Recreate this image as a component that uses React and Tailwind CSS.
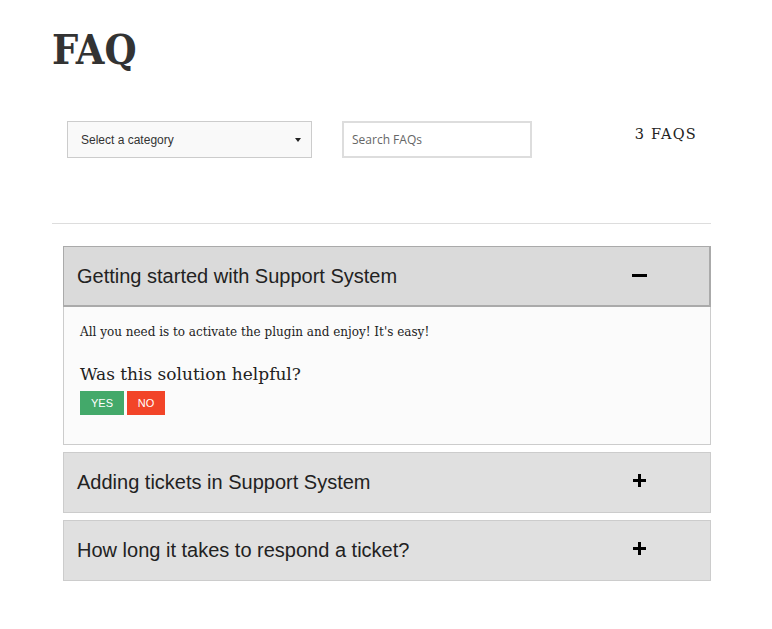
import React, { useState } from 'react';

const faqs = [
    { q: 'Getting started with Support System', a: "All you need is to activate the plugin and enjoy! It's easy!" },
    { q: 'Adding tickets in Support System', a: 'Open the tickets page and click the add button.' },
    { q: 'How long it takes to respond a ticket?', a: 'Usually within one business day.' },
];

const App = () => {
    const [open, setOpen] = useState(0);

    return (
        <div className="bg-white min-h-[629px] w-[772px] text-[#333]">
            <div className="pl-[52px] pr-[61px] pt-[22px]">

                {/* Title */}
                <h1 className="font-['DejaVu_Serif_Condensed','DejaVu_Serif',serif] font-bold text-[41px] leading-[56px] text-[#333]">
                    FAQ
                </h1>

                {/* Filters */}
                <div className="mt-[43px] flex items-start pl-[15px]">
                    <div className="relative w-[245px] h-[37px] border border-[#ccc] bg-[#f9f9f9] flex items-center pl-[13px] font-['Liberation_Sans',Arial,sans-serif] text-[12px] text-[#333]">
                        Select a category
                        <span className="absolute right-[10px] top-[16px] w-0 h-0 border-l-[3px] border-r-[3px] border-t-[4px] border-l-transparent border-r-transparent border-t-[#222]"></span>
                    </div>
                    <div className="ml-[30px] w-[190px] h-[37px] border-2 border-[#ddd] bg-white flex items-center pl-[8px] font-['Open_Sans',sans-serif] text-[12px] text-[#666]">
                        Search FAQs
                    </div>
                    <div className="ml-auto mt-[3px] mr-[14px] font-['DejaVu_Serif',serif] text-[14.5px] tracking-[1.2px] text-[#222]">
                        3 FAQS
                    </div>
                </div>

                <div className="mt-[65px] border-t border-[#ddd]"></div>

                {/* Accordion */}
                <div className="mt-[22px] ml-[11px] flex flex-col gap-[7px]">
                    {faqs.map((f, i) => {
                        const isOpen = open === i;
                        return (
                            <div key={i}>
                                <button
                                    onClick={() => setOpen(isOpen ? -1 : i)}
                                    className={`w-full h-[61px] flex items-center justify-between pl-[13px] text-left font-['Liberation_Sans',Arial,sans-serif] text-[20px] text-[#222] border ${isOpen ? 'pr-[62px] bg-[#dadada] border-[#aaa] border-b-2 border-r-2' : 'pr-[64px] bg-[#e0e0e0] border-[#ccc]'}`}
                                >
                                    <span className={isOpen ? 'mt-[-1px]' : 'mt-[-2px]'}>{f.q}</span>
                                    {isOpen ? (
                                        <span className="block w-[15px] h-[3px] bg-black mt-[-2px]"></span>
                                    ) : (
                                        <svg width="13" height="13" viewBox="0 0 13 13" className="mt-[-4px]">
                                            <rect x="5" y="0" width="3" height="13" fill="#000" />
                                            <rect x="0" y="5" width="13" height="3" fill="#000" />
                                        </svg>
                                    )}
                                </button>
                                {isOpen && (
                                    <div className="border border-t-0 border-[#ccc] bg-[#fbfbfb] h-[138px] pl-[16px] pt-[15px]">
                                        <p className="font-['DejaVu_Serif',serif] text-[12px] text-[#222] leading-[20px]">{f.a}</p>
                                        <h3 className="mt-[19px] font-['DejaVu_Serif',serif] text-[17px] text-[#222] leading-[26px]">Was this solution helpful?</h3>
                                        <div className="mt-[4px] flex gap-[3px] font-['Liberation_Sans',Arial,sans-serif] text-[11px] text-white">
                                            <button className="w-[44px] h-[24px] bg-[#43a96a]">YES</button>
                                            <button className="w-[38px] h-[24px] bg-[#f24428]">NO</button>
                                        </div>
                                    </div>
                                )}
                            </div>
                        );
                    })}
                </div>
            </div>
        </div>
    );
};

export default App;
